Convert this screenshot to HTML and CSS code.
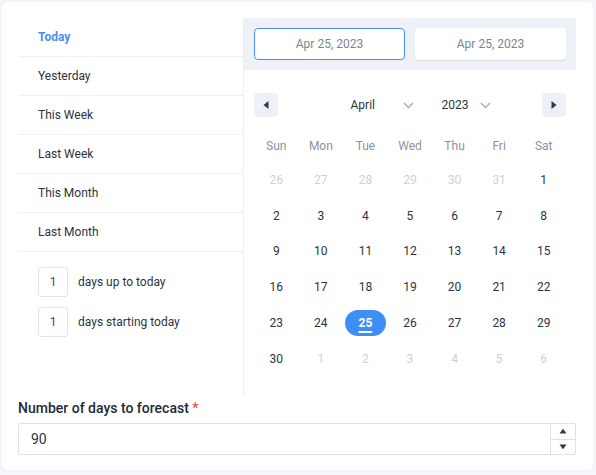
FILE: index.html
```html
<!DOCTYPE html>
<html lang="en">
<head>
<meta charset="utf-8">
<title>Date range</title>
<link rel="stylesheet" href="styles.css">
</head>
<body>
<div class="card">
  <div class="picker">
    <div class="presets">
      <ul class="preset-list">
        <li class="preset active">Today</li>
        <li class="preset">Yesterday</li>
        <li class="preset">This Week</li>
        <li class="preset">Last Week</li>
        <li class="preset">This Month</li>
        <li class="preset">Last Month</li>
      </ul>
      <div class="relative-row"><span class="num-box">1</span><span class="rel-label">days up to today</span></div>
      <div class="relative-row"><span class="num-box">1</span><span class="rel-label">days starting today</span></div>
    </div>
    <div class="calendar-panel">
      <div class="range-head">
        <div class="date-input focused">Apr 25, 2023</div>
        <div class="date-input">Apr 25, 2023</div>
      </div>
      <div class="calendar">
        <div class="nav">
          <button class="nav-btn" aria-label="Previous month"><svg width="8" height="10" viewBox="0 0 8 10"><path d="M6.5 1 L1.5 5 L6.5 9 Z" fill="#2c3a4b"/></svg></button>
          <div class="selects">
            <div class="select month"><span>April</span><svg width="11" height="7" viewBox="0 0 11 7"><path d="M1 1 L5.5 5.5 L10 1" fill="none" stroke="#a3abb5" stroke-width="1.3"/></svg></div>
            <div class="select year"><span>2023</span><svg width="11" height="7" viewBox="0 0 11 7"><path d="M1 1 L5.5 5.5 L10 1" fill="none" stroke="#a3abb5" stroke-width="1.3"/></svg></div>
          </div>
          <button class="nav-btn" aria-label="Next month"><svg width="8" height="10" viewBox="0 0 8 10"><path d="M1.5 1 L6.5 5 L1.5 9 Z" fill="#2c3a4b"/></svg></button>
        </div>
        <div class="grid">
          <span class="wd">Sun</span><span class="wd">Mon</span><span class="wd">Tue</span><span class="wd">Wed</span><span class="wd">Thu</span><span class="wd">Fri</span><span class="wd">Sat</span>
          <span class="day muted">26</span><span class="day muted">27</span><span class="day muted">28</span><span class="day muted">29</span><span class="day muted">30</span><span class="day muted">31</span><span class="day">1</span>
          <span class="day">2</span><span class="day">3</span><span class="day">4</span><span class="day">5</span><span class="day">6</span><span class="day">7</span><span class="day">8</span>
          <span class="day">9</span><span class="day">10</span><span class="day">11</span><span class="day">12</span><span class="day">13</span><span class="day">14</span><span class="day">15</span>
          <span class="day">16</span><span class="day">17</span><span class="day">18</span><span class="day">19</span><span class="day">20</span><span class="day">21</span><span class="day">22</span>
          <span class="day">23</span><span class="day">24</span><span class="day selected"><span class="pill">25</span></span><span class="day">26</span><span class="day">27</span><span class="day">28</span><span class="day">29</span>
          <span class="day">30</span><span class="day muted">1</span><span class="day muted">2</span><span class="day muted">3</span><span class="day muted">4</span><span class="day muted">5</span><span class="day muted">6</span>
        </div>
      </div>
    </div>
  </div>
  <label class="field-label">Number of days to forecast <span class="req">*</span></label>
  <div class="number-input">
    <span class="value">90</span>
    <div class="spinner">
      <span class="spin"><svg width="8" height="6" viewBox="0 0 8 6"><path d="M0.5 5.5 L4 0.8 L7.5 5.5 Z" fill="#2c3a4b"/></svg></span>
      <span class="spin"><svg width="8" height="6" viewBox="0 0 8 6"><path d="M0.5 0.5 L4 5.2 L7.5 0.5 Z" fill="#2c3a4b"/></svg></span>
    </div>
  </div>
</div>
</body>
</html>
```
FILE: styles.css
```css
* { box-sizing: border-box; }
html, body { margin: 0; padding: 0; }
body {
  background: #f4f6f9;
  font-family: Roboto, "Liberation Sans", Arial, sans-serif;
  color: #2b3442;
  padding: 2px;
  width: 596px;
  height: 475px;
}
.card {
  background: #fff;
  width: 591px;
  height: 468px;
  border-radius: 6px;
  padding: 16px 17px 0 16px;
  box-shadow: 0 0 1px rgba(0,0,0,0.04);
}
.picker { display: flex; height: 379px; }
.presets { width: 225px; flex: none; }
.preset-list { list-style: none; margin: 0; padding: 0; }
.preset {
  height: 39px;
  line-height: 38px;
  padding-left: 20px;
  font-size: 12px;
  color: #2b3442;
  border-bottom: 1px solid #edf0f4;
}
.preset.active { color: #4a8ef5; font-weight: 700; }
.relative-row { display: flex; align-items: center; padding-left: 20px; margin-top: 10px; }
.preset-list + .relative-row { margin-top: 15px; }
.num-box {
  width: 30px; height: 30px;
  border: 1px solid #dfe4ea;
  border-radius: 3px;
  font-size: 12px;
  color: #444c57;
  display: flex; align-items: center; justify-content: center;
}
.rel-label { font-size: 12px; margin-left: 10px; color: #2b3442; }
.calendar-panel { flex: 1; border-left: 1px solid #eceff3; }
.range-head {
  background: #eef2f6;
  padding: 10px 10px;
  display: flex;
  gap: 10px;
  height: 52px;
}
.date-input {
  flex: 1;
  height: 32px;
  background: #fff;
  border: 1px solid #fff;
  border-radius: 4px;
  font-size: 12px;
  color: #7b8591;
  display: flex; align-items: center; justify-content: center;
  box-shadow: 0 1px 1px rgba(0,0,0,0.08);
}
.date-input.focused { border-color: #4a8ef5; box-shadow: none; }
.calendar { padding: 23px 10px 0 10px; }
.nav { display: flex; align-items: center; height: 24px; }
.nav-btn {
  width: 24px; height: 24px;
  border: none; border-radius: 4px;
  background: #edf1f6;
  padding: 0;
  display: flex; align-items: center; justify-content: center;
}
.selects { flex: 1; display: flex; justify-content: center; gap: 13px; padding-left: 16px; }
.select {
  display: flex; align-items: center; justify-content: space-between;
  font-size: 12px; color: #2b3442;
  padding: 0 5px 0 10px;
  height: 24px;
}
.select.month { width: 78px; }
.select.year { width: 64px; }
.grid {
  display: grid;
  grid-template-columns: repeat(7, 1fr);
  grid-template-rows: 32px;
  grid-auto-rows: 35.8px;
  margin-top: 13px;
}
.wd, .day {
  display: flex; align-items: center; justify-content: center;
  font-size: 12px;
}
.wd { color: #8b939e; }
.day { color: #2b3442; }
.day.muted { color: #cdd2d8; }
.pill {
  width: 41px; height: 26px;
  border-radius: 13px;
  background: #3d8ff6;
  color: #fff;
  font-weight: 700;
  display: flex; align-items: center; justify-content: center;
  text-decoration: underline;
  text-decoration-thickness: 2px;
  text-underline-offset: 4px;
}
.field-label {
  display: block;
  margin-top: 3px;
  font-size: 14px;
  font-weight: 500;
  color: #212b38;
  height: 17px;
  line-height: 17px;
}
.req { color: #e05a5a; }
.number-input {
  margin-top: 6px;
  height: 32px;
  border: 1px solid #dde2e9;
  border-radius: 2px;
  display: flex; align-items: center;
}
.value { flex: 1; padding-left: 12px; font-size: 14px; color: #2b3442; }
.spinner {
  width: 25px; height: 100%;
  border-left: 1px solid #dde2e9;
  display: flex; flex-direction: column;
}
.spin { flex: 1; display: flex; align-items: center; justify-content: center; }
.spin + .spin { border-top: 1px solid #dde2e9; }
```
